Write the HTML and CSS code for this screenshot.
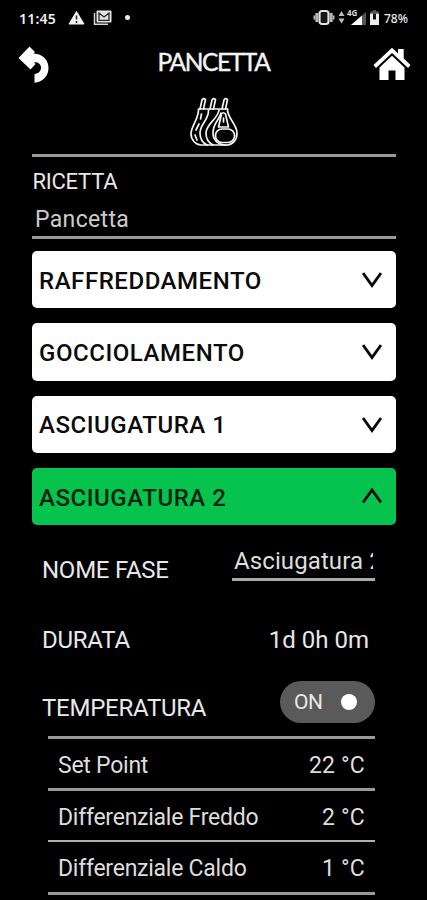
FILE: index.html
```html
<!DOCTYPE html>
<html lang="it">
<head>
<meta charset="utf-8">
<meta name="viewport" content="width=device-width">
<title>Pancetta</title>
<link rel="stylesheet" href="styles.css">
</head>
<body>
<div class="status">
  <span class="clock">11:45</span>
  <svg class="st-left" width="66" height="20" viewBox="0 0 66 20">
    <path d="M9.500 3.500 17 16H2z" fill="#f2f2f2" stroke="#f2f2f2" stroke-linejoin="round"/>
    <path d="M9.500 7.500v4M9.500 13v2" stroke="#222" stroke-width="1.500"/>
    <path d="M27.500 5v11.300H41" fill="none" stroke="#d8d8d8" stroke-width="1.500"/>
    <rect x="29.500" y="2.500" width="15" height="12" rx="1" fill="#e4e4e4"/>
    <path d="M32 12.300V5l5 4 5-4v7.300z" fill="none" stroke="#222" stroke-width="1.300"/>
    <circle cx="60.500" cy="9.500" r="2.500" fill="#eee"/>
  </svg>
  <svg class="st-right" width="68" height="20" viewBox="0 0 68 20">
    <rect x="6.500" y="3" width="9" height="13" rx="2.500" fill="#161616" stroke="#e2e2e2" stroke-width="2.200"/>
    <path d="M3.800 5v9M18.200 5v9" stroke="#b5b5b5" stroke-width="3"/>
    <path d="M1.300 7.500v4M20.700 7.500v4" stroke="#bbb" stroke-width="1.600"/>
    <path d="M25.500 8 28.500 3 31.500 8zM25.500 10.500h6l-3 5z" fill="#bdbdbd"/>
    <path d="M53 4v13H38z" fill="#555"/><path d="M49 7.500V17H38z" fill="#fff"/>
    <path d="M57.500 5.500V3.200H60V2h3v1.200h2.500v2.300z" fill="#555"/>
    <path d="M57 5.500h9v11.500h-9z" fill="#eee"/>
    <path d="M61.500 5.500v6" stroke="#111" stroke-width="3"/>
    <text x="34" y="8" class="net">4G</text>
  </svg>
  <span class="battery">78%</span>
</div>
<header class="header">
  <svg class="back" width="32" height="38" viewBox="0 0 32 38">
    <path d="M0.500 12 11.500 0.500 17 6 15.500 7.500C25 8 30.500 14 30.500 22 30.500 30 25 36 16.500 36.800V28C20.500 27.500 23 25 23 21.500 23 18 20 16 16 16.200L17.500 18 12.500 23.500z" fill="#fff"/>
  </svg>
  <h1 class="title">PANCETTA</h1>
  <svg class="home" width="38" height="34" viewBox="0 0 38 34">
    <path d="M0.500 18 19 0.800 25 6.400V2h5.700v9.500L37.500 18l-2.400 3L19 6 3 21z" fill="#fff"/>
    <path d="M19 8.800 31.500 20.500V33h-9V23.500h-7V33h-9V20.500z" fill="#fff"/>
  </svg>
</header>
<div class="emblem">
  <svg width="52" height="54" viewBox="0 0 52 54" fill="none" stroke="#f4f4f4" stroke-width="1.700" stroke-linejoin="round" stroke-linecap="round">
    <path d="M11 12 13 3Q14.500 .5 16.500 2.500L14.500 12M21 12 23 3Q24.500 .5 26.500 2.500L24.500 12M33 12 35 3Q36.500 .5 38.500 2.500L36.500 12"/>
    <path d="M9.500 12H38.500M9.500 12C10 22 2 29 2 37 2 43 7 48 12 48H37"/>
    <path d="M19.500 13C20 23 11 27 11 36 11 43 14 46 18 48"/>
    <path d="M30 13C29 22 17 27 17 36 17 43 20 46 24 48"/>
    <path d="M38.500 12C38 21 48 27 48 36 48 43 44 48 37 48 29 48 24 43 24 36 24 26 30 24 32 16"/>
    <path d="M29.500 30 32.500 17Q34.500 14.500 36.500 17L39.500 30zM34.500 21v4"/>
    <rect x="26.500" y="32" width="19" height="13.500" rx="6.500"/>
    <path d="M12.500 17 11.500 22M10 27 7 33M6 38 8 43"/>
  </svg>
</div>
<main class="content">
  <section class="recipe">
    <div class="recipe-label">RICETTA</div>
    <div class="recipe-value">Pancetta</div>
  </section>
  <nav class="phases">
    <div class="phase"><span>RAFFREDDAMENTO</span><svg width="20" height="16" viewBox="0 0 20 16"><path d="M1 1 10 13.500 19 1"/></svg></div>
    <div class="phase"><span>GOCCIOLAMENTO</span><svg width="20" height="16" viewBox="0 0 20 16"><path d="M1 1 10 13.500 19 1"/></svg></div>
    <div class="phase"><span>ASCIUGATURA 1</span><svg width="20" height="16" viewBox="0 0 20 16"><path d="M1 1 10 13.500 19 1"/></svg></div>
    <div class="phase open"><span>ASCIUGATURA 2</span><svg width="20" height="16" viewBox="0 0 20 16"><path d="M1 14.500 10 2 19 14.500"/></svg></div>
  </nav>
  <section class="details">
    <div class="row name"><span class="label">NOME FASE</span><div class="field"><span>Asciugatura 2</span></div></div>
    <div class="row duration"><span class="label">DURATA</span><span class="time">1d 0h 0m</span></div>
    <div class="row temperature"><span class="label">TEMPERATURA</span><div class="toggle"><span>ON</span><i></i></div></div>
    <div class="table">
      <div class="item"><span>Set Point</span><span class="val">22 °C</span></div>
      <div class="item"><span>Differenziale Freddo</span><span class="val">2 °C</span></div>
      <div class="item thin"><span>Differenziale Caldo</span><span class="val">1 °C</span></div>
      <div class="item end"></div>
    </div>
  </section>
</main>
</body>
</html>
```
FILE: styles.css
```css
* { box-sizing: border-box; }
body {
  margin: 0;
  width: 427px;
  height: 900px;
  overflow: hidden;
  background: #000;
  color: #e8e8e8;
  font-family: Roboto, "Liberation Sans", sans-serif;
  white-space: nowrap;
}
svg { display: block; flex: none; }
.status {
  display: flex;
  align-items: center;
  height: 36px;
  padding: 0 17px 0 19px;
  font-family: "Noto Sans", sans-serif;
}
.clock { width: 48px; font-size: 14px; font-weight: 600; color: #f0f0f0; letter-spacing: .2px; }
.st-right { margin-left: auto; }
.battery { width: 26px; margin-left: 3px; font-size: 12px; font-weight: 500; letter-spacing: 0; }
.net { font: 700 8px "Noto Sans", sans-serif; fill: #ddd; }
.header { display: flex; height: 57px; padding: 10px 16px 0 18px; justify-content: space-between; }
.title {
  width: 121px;
  margin: 1px 0 0 13px;
  font: 400 24.500px/30px Lato, sans-serif;
  letter-spacing: -1.400px;
  color: #f4f4f4;
  -webkit-text-stroke: .4px #f4f4f4;
}
.home { margin-top: 1px; }
.emblem { display: flex; height: 60px; padding: 4px 0 0 189px; }
.content { padding: 0 31px 0 32px; }
.recipe { border-top: 3px solid #999; border-bottom: 3px solid #999; height: 85px; margin-top: .5px; }
.recipe-label { font-size: 22px; line-height: 50px; height: 46px; padding-left: .5px; letter-spacing: -.25px; }
.recipe-value { font-size: 23px; line-height: 34px; padding-left: 3px; color: #ccc; letter-spacing: .35px; }
.phases { display: flex; flex-direction: column; gap: 15px; padding-top: 12.500px; }
.phase {
  display: flex;
  align-items: center;
  justify-content: space-between;
  height: 57.330px;
  padding: 2px 14px 0 7px;
  border-radius: 5px;
  background: #fff;
  color: #0b0b0b;
  font-size: 24px;
  font-weight: 500;
  letter-spacing: .55px;
}
.phase svg { margin-top: -1px; fill: none; stroke: #0b0b0b; stroke-width: 2.900; }
.phase.open { background: #05c34c; color: #06220f; }
.phase.open svg { margin-top: -3px; }
.details { padding: 10px 21px 0 10px; font-size: 24px; }
.row { display: flex; justify-content: space-between; align-items: center; }
.label { letter-spacing: -.25px; }
.name { height: 71px; }
.name .label { margin-top: -1px; }
.field { width: 143px; height: 34px; margin-top: -13px; padding: 0 2px; border-bottom: 3px solid #aaa; line-height: 28px; color: #ddd; letter-spacing: .1px; }
.field span { display: block; overflow: hidden; }
.duration { height: 68px; }
.time { padding-right: 6px; }
.temperature { height: 62px; }
.temperature .label { margin-top: 5px; }
.toggle { display: flex; align-items: center; justify-content: space-between; width: 95px; height: 42px; padding: 0 18px 0 14px; margin-top: -6px; border-radius: 21px; background: #5a5a5a; font-size: 21px; }
.toggle span { letter-spacing: -.4px; }
.toggle i { width: 16px; height: 16px; border-radius: 50%; background: #fff; }
.table { margin-left: 6px; }
.item { display: flex; justify-content: space-between; align-items: center; height: 52px; padding: 3px 10px 0; border-top: 3px solid #999; color: #ddd; font-size: 23px; letter-spacing: -.25px; }
.val { letter-spacing: .2px; }
.item.thin { border-top: 2px solid #b0b0b0; }
.item.end { height: 3px; padding: 0; }
```
